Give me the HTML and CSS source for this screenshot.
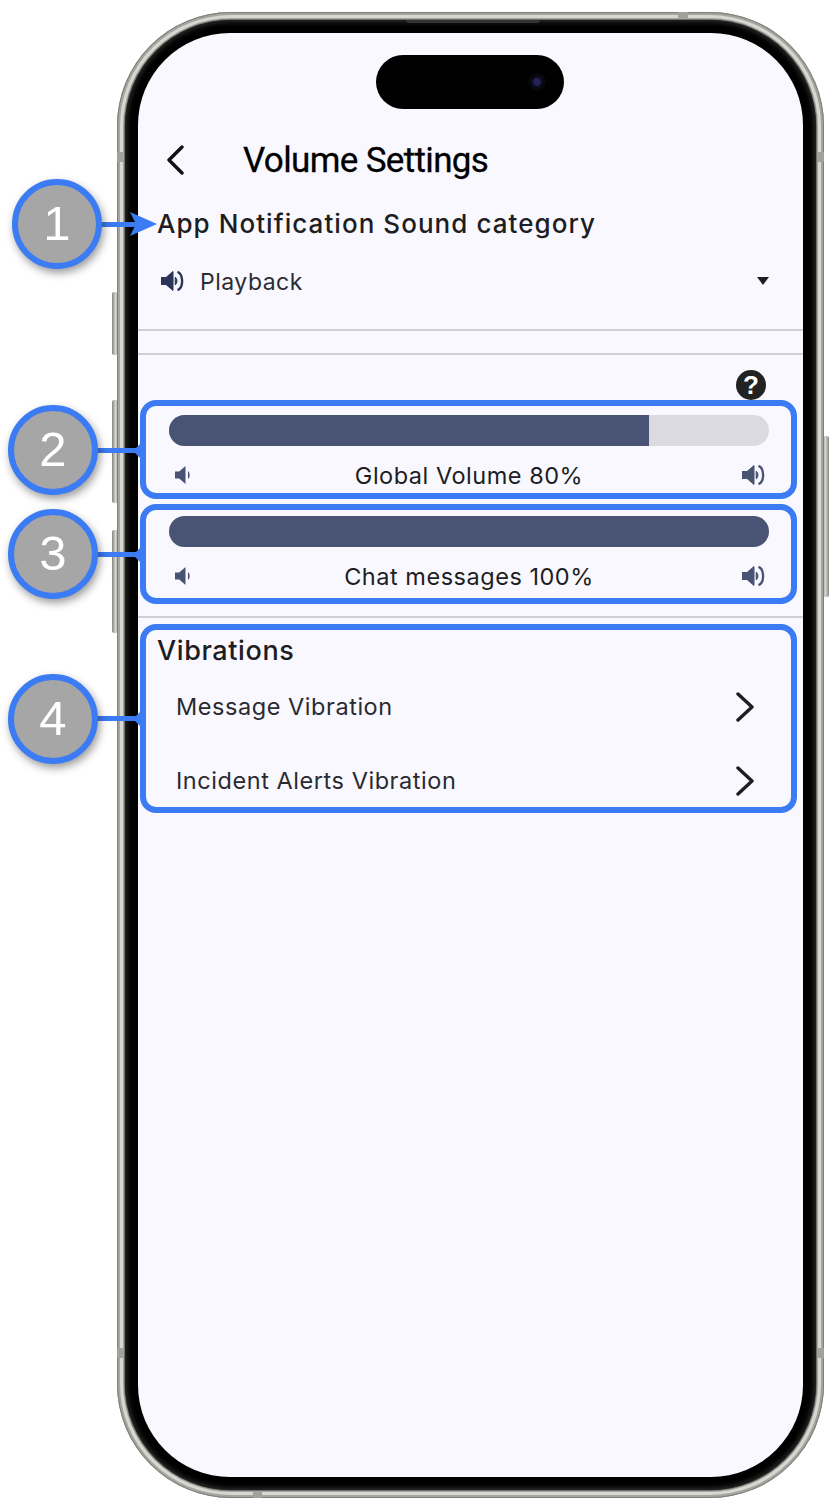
FILE: index.html
```html
<!DOCTYPE html>
<html lang="en">
<head>
<meta charset="utf-8">
<title>Volume Settings</title>
<link rel="stylesheet" href="styles.css">
</head>
<body>
<svg class="defs" width="0" height="0" aria-hidden="true">
  <symbol id="spk-lo" viewBox="0 0 18 20"><path d="M0 6.5h4.2L10.5 1v18l-6.3-5.5H0z"/><path d="M13 6.2c2.2 1 2.2 6.6 0 7.6z"/></symbol>
  <symbol id="spk-hi" viewBox="0 0 24 22"><path d="M0 7.5h5L12 1.5v19l-7-6H0z"/><path d="M14.2 7.2c2.3 1 2.3 6.6 0 7.6z"/><path class="arc" d="M16.5 1.8c6.2 2.6 6.2 15.8 0 18.4"/></symbol>
</svg>
<div class="stage">
  <div class="btn btn-a"></div>
  <div class="btn btn-b"></div>
  <div class="btn btn-c"></div>
  <div class="btn btn-r"></div>
  <div class="phone">
    <span class="band band-top"></span>
    <span class="band band-bottom"></span>
    <span class="band band-lt"></span>
    <span class="band band-rt"></span>
    <span class="band band-lb"></span>
    <span class="band band-rb"></span>
    <div class="bezel">
      <div class="sensor"></div>
      <div class="island"><span class="cam"></span></div>
      <main class="screen">
        <header class="nav">
          <svg class="back" viewBox="0 0 18 30"><path d="M16 2 3 15l13 13"/></svg>
          <h1 class="title">Volume Settings</h1>
        </header>
        <h2 class="cat">App Notification Sound category</h2>
        <div class="select">
          <svg class="spk-sel"><use href="#spk-hi"/></svg>
          <span class="select-text">Playback</span>
          <span class="caret"></span>
        </div>
        <hr class="rule rule-a">
        <hr class="rule rule-b">
        <div class="help-row"><span class="help">?</span></div>
        <section class="box box-global">
          <div class="bar"><div class="fill" style="width:80%"></div></div>
          <div class="bar-label">
            <svg class="spk-lo"><use href="#spk-lo"/></svg>
            <span>Global Volume 80%</span>
            <svg class="spk-hi"><use href="#spk-hi"/></svg>
          </div>
        </section>
        <section class="box box-chat">
          <div class="bar"><div class="fill" style="width:100%"></div></div>
          <div class="bar-label">
            <svg class="spk-lo"><use href="#spk-lo"/></svg>
            <span>Chat messages 100%</span>
            <svg class="spk-hi"><use href="#spk-hi"/></svg>
          </div>
        </section>
        <hr class="rule rule-c">
        <section class="box box-vib">
          <h2 class="vib-title">Vibrations</h2>
          <div class="vib-row">
            <span>Message Vibration</span>
            <svg class="next" viewBox="0 0 18 30"><path d="M2 2l14 13L2 28"/></svg>
          </div>
          <div class="vib-row">
            <span>Incident Alerts Vibration</span>
            <svg class="next" viewBox="0 0 18 30"><path d="M2 2l14 13L2 28"/></svg>
          </div>
        </section>
      </main>
    </div>
  </div>

  <div class="link link-1"></div><div class="head-1"></div>
  <div class="link link-2"></div><div class="tip tip-2"></div>
  <div class="link link-3"></div><div class="tip tip-3"></div>
  <div class="link link-4"></div><div class="tip tip-4"></div>
  <div class="badge badge-1">1</div>
  <div class="badge badge-2">2</div>
  <div class="badge badge-3">3</div>
  <div class="badge badge-4">4</div>
</div>
</body>
</html>
```
FILE: styles.css
```css
* { box-sizing: border-box; }
html, body { margin: 0; padding: 0; background: #fff; }
body { font-family: "Inter", "Liberation Sans", sans-serif; color: #1d1d22; }
.defs { position: absolute; }
.stage { position: relative; width: 840px; height: 1510px; padding: 12px 0 0 117px; overflow: hidden; }

.phone {
  position: relative;
  width: 707px; height: 1486px; padding: 8px;
  border-radius: 114px;
  background: #dcdcd6;
  box-shadow: inset 0 0 0 1px #7f7f79, inset 0 0 0 3px #a5a59f, inset 0 0 0 8px #d8d8d2;
}
.band { position: absolute; background: #a2a29c; }
.band-top { left: 561px; top: 0; width: 10px; height: 8px; }
.band-bottom { left: 136px; bottom: 0; width: 9px; height: 8px; }
.band-lt { left: 0; top: 140px; width: 8px; height: 10px; }
.band-rt { right: 0; top: 140px; width: 8px; height: 10px; }
.band-lb { left: 0; bottom: 140px; width: 8px; height: 10px; }
.band-rb { right: 0; bottom: 140px; width: 8px; height: 10px; }
.bezel {
  position: relative; width: 691px; height: 1470px;
  padding: 13px;
  border-radius: 106px; background: #000;
  box-shadow: 0 0 0 1px #6f6f69, 0 0 0 2px #a5a59f, inset 0 0 5px 2px #2c2c2c;
}
.screen {
  width: 665px; height: 1444px; padding-top: 97px;
  border-radius: 92px; background: #f9f8ff;
  overflow: hidden;
}
.sensor { position: absolute; left: 281px; top: 0; width: 134px; height: 3px; background: #333; border-radius: 0 0 4px 4px; }
.island { position: absolute; left: 251px; top: 35px; width: 188px; height: 54px; border-radius: 27px; background: #000; }
.cam { position: absolute; left: 152px; top: 18px; width: 18px; height: 18px; border-radius: 50%; background: radial-gradient(circle, #23235a 0 3px, #0a0a18 5px, #060608 9px); }

.btn { position: absolute; background: linear-gradient(90deg, #85857f, #d8d8d2 60%, #a0a09a); border-radius: 2px; }
.btn-a { left: 112px; top: 292px; width: 6px; height: 63px; }
.btn-b { left: 112px; top: 400px; width: 6px; height: 103px; }
.btn-c { left: 112px; top: 530px; width: 6px; height: 103px; }
.btn-r { left: 823px; top: 436px; width: 6px; height: 161px; background: linear-gradient(90deg, #a0a09a, #d8d8d2 40%, #85857f); }

.nav { display: flex; align-items: center; height: 60px; padding-left: 28px; }
.back { width: 18px; height: 30px; fill: none; stroke: #111; stroke-width: 3.4; stroke-linecap: round; stroke-linejoin: round; }
.title { margin: 2px 0 0 59px; font: 400 35px/60px "Roboto", sans-serif; letter-spacing: -0.65px; color: #000; -webkit-text-stroke: 0.3px #000; }

.cat { margin: 14px 0 0 19px; font: 450 26px/40px "Inter", sans-serif; letter-spacing: 1.05px; color: #1d1d22; }
.select { display: flex; align-items: center; height: 58px; margin-top: 8px; padding: 0 34px 0 23px; }
.spk-sel { width: 24px; height: 22px; fill: #2b3558; stroke: #2b3558; }
.select-text { margin: 2px 0 0 15px; font-size: 23px; letter-spacing: 0.5px; color: #2c2c33; }
.caret { width: 0; height: 0; margin-left: auto; border: 6px solid transparent; border-top: 8px solid #1d1d22; border-bottom: 0; }

.rule { display: block; margin: 0; border: 0; height: 2px; background: #cfcfd4; }
.rule-a { margin-top: 19px; }
.rule-b { margin-top: 22px; }
.rule-c { margin-top: 12px; }

.help-row { display: flex; justify-content: flex-end; margin-top: 15px; height: 30px; padding-right: 37px; position: relative; z-index: 1; }
.help { width: 30px; height: 30px; border-radius: 50%; background: #222; color: #fff; font: 700 26px/30px "Liberation Sans", sans-serif; text-align: center; }

.box { margin: 0 6px 0 2px; border: 6px solid #3b7bf3; border-radius: 16px; }
.box-global { height: 99px; padding: 9px 22px 0 23px; }
.box-chat { height: 100px; margin-top: 5px; padding: 6px 22px 0 23px; }
.box-vib { height: 189px; margin-top: 6px; padding: 6px 0 0 11px; }

.bar { height: 31px; border-radius: 15.5px; background: #dadae0; overflow: hidden; }
.fill { height: 100%; background: #495373; }
.bar-label { display: grid; grid-template-columns: 1fr auto 1fr; align-items: center; height: 30px; margin-top: 14px; font-size: 23.5px; letter-spacing: 0.52px; color: #1d1d22; }
.spk-lo { width: 18px; height: 20px; margin-left: 6px; fill: #495373; }
.spk-hi { width: 24px; height: 22px; justify-self: end; margin-right: 3px; fill: #495373; stroke: #495373; }
.arc { fill: none; stroke-width: 2.4; }

.vib-title { margin: 0; font: 500 27px/30px "Inter", sans-serif; letter-spacing: 0.6px; color: #1d1d22; }
.vib-row { display: flex; align-items: center; justify-content: space-between; height: 40px; margin-top: 34px; padding: 0 37px 0 19px; font-size: 23.5px; letter-spacing: 0.55px; color: #2a2a30; }
.vib-title + .vib-row { margin-top: 20px; }
.next { width: 18px; height: 30px; margin-top: 2px; fill: none; stroke: #1d1d22; stroke-width: 3.4; stroke-linecap: round; stroke-linejoin: round; }

.badge {
  position: absolute; width: 90px; height: 90px; border: 6px solid #3b7bf3; border-radius: 50%;
  background: #a6a6a6; color: #fff; font: 400 49px/77px "Liberation Sans", sans-serif; text-align: center;
  box-shadow: 2px 4px 8px rgba(0,0,0,.4);
}
.badge-1 { left: 12px; top: 179px; }
.badge-2 { left: 8px; top: 405px; }
.badge-3 { left: 8px; top: 509px; }
.badge-4 { left: 8px; top: 674px; }

.link { position: absolute; height: 5px; background: #3b7bf3; }
.link-1 { left: 100px; top: 222px; width: 36px; }
.link-2 { left: 96px; top: 448px; width: 40px; }
.link-3 { left: 96px; top: 552px; width: 40px; }
.link-4 { left: 96px; top: 716px; width: 40px; }
.head-1 { position: absolute; left: 130px; top: 212px; width: 27px; height: 24px; background: #3b7bf3; clip-path: polygon(0 0, 100% 50%, 0 100%, 6px 50%); }
.tip { position: absolute; border-right: 8px solid #3b7bf3; border-top: 8px solid transparent; border-bottom: 8px solid transparent; }
.tip-2 { left: 133px; top: 443px; }
.tip-3 { left: 133px; top: 547px; }
.tip-4 { left: 133px; top: 711px; }
```
